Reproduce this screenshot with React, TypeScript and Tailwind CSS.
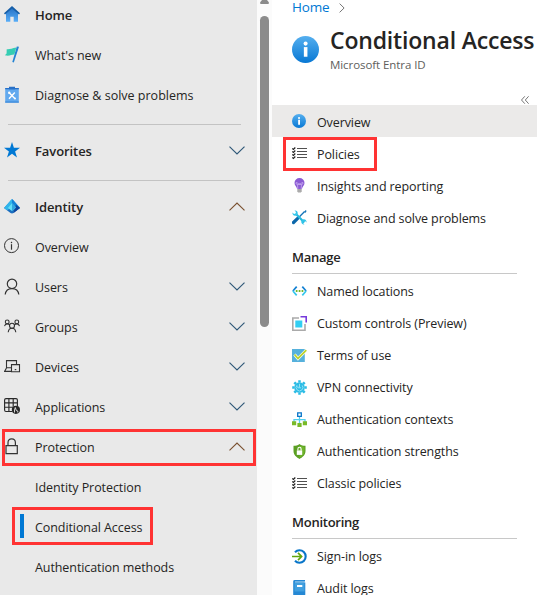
import type { ReactNode } from "react";

type Toggle = "down" | "up";

function Chevron({ dir }: { dir: Toggle }) {
  return (
    <svg width="16" height="9" viewBox="0 0 16 9" fill="none" strokeWidth="1.15" className="absolute right-3 top-[15px]">
      <path d={dir === "down" ? "M.5 .7 8 8 15.5 .7" : "M.5 8.3 8 1 15.5 8.3"} stroke={dir === "down" ? "#2f5878" : "#7a5130"} />
    </svg>
  );
}

function HomeIcon() {
  return (
    <svg width="16" height="16" viewBox="0 0 16 16">
      <defs><linearGradient id="home" x2="0" y2="1"><stop stopColor="#2470c4" /><stop offset="1" stopColor="#59aef8" /></linearGradient></defs>
      <path d="M2 7 8 1.5 14 7v8.8H9.7v-5H6.3v5H2z" fill="url(#home)" />
      <path d="M8 0 16 7.3 15 8.4 8 2.5 1 8.4 0 7.3z" fill="#155ea8" />
    </svg>
  );
}

function FlagIcon() {
  return (
    <svg width="16" height="17" viewBox="0 0 16 17">
      <path d="M12.8.5 15 .8 9.8 16.4 8.3 16z" fill="#2383d3" />
      <path d="M2.700 3.200c3 .4 5-.9 9.600-1.700l-1.900 7C7.300 8.400 5.500 10.600.9 9.300L2.600 7.500z" fill="#35cdb3" />
    </svg>
  );
}

function ClipboardIcon() {
  return (
    <svg width="16" height="17" viewBox="0 0 16 17">
      <path d="M1.2 2h13.6v14.6H1.2z" fill="#62a9ee" />
      <path d="M1.2 2h13.6v1.2H1.2zM5 .8h6v2.8H5z" fill="#2870c7" />
      <path d="M1.2 15.5h13.6v1.1H1.2z" fill="#3584d8" />
      <path d="m5 6.500 6 6.300M10.800 6.500 5 12.800" stroke="#fff" strokeWidth="1.4" />
      <circle cx="5.200" cy="6.800" r="1.2" fill="#fff" /><circle cx="11" cy="12.6" r="1" fill="#fff" />
    </svg>
  );
}

function StarIcon() {
  return (
    <svg width="16" height="16" viewBox="0 0 16 16">
      <path d="M8 0 9.9 5.8H16L11.1 9.5 13 15.5 8 11.8 3 15.5 4.9 9.5 0 5.8H6.1z" fill="#0078d4" />
    </svg>
  );
}

function EntraIcon() {
  return (
    <svg width="16" height="15" viewBox="0 0 16 15">
      <path d="M8 .3 16 9 9.5 14q-1.5.9-3 0L0 9z" fill="#1b6fc0" />
      <path d="M8 .3 12.2 5 8 8.5 3 11.2 0 9 6.9.9Q7.400.3 8 .3z" fill="#31b5eb" />
      <path d="M8 .3Q8.700.3 9.200.9L16 8.800 12.200 11.700 8 7.500z" fill="#1685d8" />
      <path d="M11.900 5.800 16 9 9.500 14z" fill="#10439a" />
      <path d="M8 4.200 12 8.600 8 12 3.900 9z" fill="#63dff7" />
      <path d="M8 4.200 12 8.600 8 12z" fill="#32a6df" />
    </svg>
  );
}

function InfoLineIcon() {
  return (
    <svg width="16" height="16" viewBox="0 0 16 16" fill="none" stroke="#333" strokeWidth="1">
      <circle cx="7.500" cy="7.600" r="7" /><path d="M7.500 6.200v5.500" strokeWidth="1.200" /><path d="M7.500 3.800v1.400" strokeWidth="1.300" />
    </svg>
  );
}

function UserIcon() {
  return (
    <svg width="16" height="17" viewBox="0 0 16 17" fill="none" stroke="#333" strokeWidth="1.200">
      <circle cx="8" cy="5.800" r="4.700" /><path d="M1.200 16.500C1.700 12.700 4 10.600 8 10.600s6.300 2.100 6.800 5.900" />
    </svg>
  );
}

function GroupIcon() {
  return (
    <svg width="16" height="14" viewBox="0 0 16 14" fill="none" stroke="#333" strokeWidth="1.100">
      <circle cx="3.200" cy="2.900" r="1.900" /><circle cx="12.800" cy="2.900" r="1.900" /><circle cx="8" cy="6.800" r="2.500" />
      <path d="M.5 7.200C.8 5.700 1.800 4.900 3.200 4.900c1.200 0 2 .5 2.600 1.200M15.500 7.200c-.3-1.500-1.300-2.300-2.700-2.300-1.200 0-2 .5-2.600 1.200M4.200 13.200C4.500 10.800 5.700 9.300 8 9.300s3.500 1.500 3.800 3.900" />
    </svg>
  );
}

function DevicesIcon() {
  return (
    <svg width="17" height="13" viewBox="0 0 17 13" fill="none" stroke="#333" strokeWidth="1.100">
      <path d="M12.500 4.500V.6h-10v7.200M7 11.400H.6l2-3.600H7" />
      <path d="M7.500 4.600h8v7.200h-8z" /><path d="M10.700 9.600h1.600" />
    </svg>
  );
}

function AppsIcon() {
  return (
    <svg width="17" height="17" viewBox="0 0 17 17" fill="none" stroke="#292929" strokeWidth="1.150">
      <path d="M8 13.500H2Q.6 13.500.6 12V2Q.6.6 2 .6h10q1.400 0 1.400 1.400v6M.6 4.900h12.800M.6 9.200h8.500M4.900.6v12.900M9.200.6v8" />
      <circle cx="11.900" cy="11.800" r="4.100" fill="#272727" stroke="none" />
      <path d="M11.300 9.500 10.500 12v2.500M11.300 9.500l1 3 1.500.5v1.500" stroke="#e9e9e9" strokeWidth=".9" />
    </svg>
  );
}

function LockIcon() {
  return (
    <svg width="14" height="17" viewBox="0 0 14 17" fill="none" stroke="#333" strokeWidth="1.200" className="ml-[1px]">
      <path d="M1 7.600h11.300v8.100H1zM3 7.500V4.700q0-3.900 3.700-3.900t3.700 3.900v2.800" />
    </svg>
  );
}

function InfoIcon({ size }: { size: number }) {
  return (
    <svg width={size} height={size} viewBox="0 0 28 28">
      <defs><linearGradient id={`info${size}`} x2="0" y2="1"><stop stopColor="#55afef" /><stop offset="1" stopColor="#0878d4" /></linearGradient></defs>
      <circle cx="14" cy="14" r="14" fill={`url(#info${size})`} />
      <path d="M12.300 11.500h3.700v10h-3.700z" fill="#fff" /><circle cx="14.100" cy="7.900" r="2.100" fill="#fff" />
    </svg>
  );
}

function ListIcon() {
  return (
    <svg width="15" height="13" viewBox="0 0 15 13" fill="none">
      <path d="M5 1.500h10M5 4.500h10M5 7.500h10M5 10.500h10" stroke="#505050" strokeWidth="1.200" />
      <path d="m.3 1.500 1.100 1L3.300.5M.3 4.500l1.100 1 1.900-2M.3 7.500l1.100 1 1.900-2M.3 10.500l1.100 1 1.900-2" stroke="#202020" strokeWidth="1.200" />
    </svg>
  );
}

function BulbIcon() {
  return (
    <svg width="15" height="15" viewBox="0 0 15 15">
      <path d="M7.500 0a5 5 0 0 1 5 5c0 2.700-2.300 3.600-2.600 6H5.100C4.800 8.600 2.500 7.700 2.500 5a5 5 0 0 1 5-5z" fill="#8b5bd3" />
      <path d="M5.800 11 5.500 6.500M9.200 11l.3-4.500M5.500 6.500q-2-.2-1.500-1.800 1.500-.7 2 1.100h3q.5-1.800 2-1.100.5 1.600-1.500 1.800z" stroke="#c6a9f0" fill="none" strokeWidth=".8" />
      <path d="M5.300 11h4.400v2.300L8.900 14.500H6.100l-.8-1.200z" fill="#aaa" />
    </svg>
  );
}

function ToolsIcon() {
  return (
    <svg width="15" height="15" viewBox="0 0 15 15" fill="none">
      <path d="m12.600 1.500-8.800 9" stroke="#1474b8" strokeWidth="1.300" />
      <path d="m13.600 0 1 1-1.300 2-1.200-.9z" fill="#1474b8" />
      <path d="m5.700 8.300-4.200 4.200" stroke="#0b67aa" strokeWidth="3.200" strokeLinecap="round" />
      <path d="m4.500 4.500 7.800 8" stroke="#27b9df" strokeWidth="2.200" />
      <path d="M2.500.5 4 2 3.500 3.500 2 4 .5 2.500C.2 4.500 1.500 6 3.700 5.700l2-2C6 1.500 4.500.2 2.500.5zM12.500 14.500 11 13l.5-1.500 1.500-.5 1.500 1.500c.3-2-1-3.500-3.200-3.200l-2 2c-.3 2.200 1.200 3.500 3.200 3.200z" fill="#32c5e9" />
    </svg>
  );
}

function CodeIcon() {
  return (
    <svg width="15" height="10" viewBox="0 0 15 10" fill="none" strokeWidth="1.700">
      <path d="M4.700.6.9 5M10.300.6 14.100 5" stroke="#1683d3" /><path d="m.9 5 3.800 4.400M14.100 5l-3.800 4.400" stroke="#35c7ec" />
      <path d="M3.800 5h1.700M6.700 5h1.700M9.600 5h1.700" stroke="#74b72b" strokeWidth="1.900" />
    </svg>
  );
}

function CustomIcon() {
  return (
    <svg width="15" height="15" viewBox="0 0 15 15" fill="none">
      <path d="M7 2H.8v12.200H13V8" stroke="#aaa" strokeWidth="1.600" />
      <path d="M8.500.8h5.700v5.700" stroke="#773adc" strokeWidth="1.600" /><path d="M3.300 4.500h7v7h-7z" fill="#32cef2" />
    </svg>
  );
}

function CheckIcon() {
  return (
    <svg width="15" height="13" viewBox="0 0 15 13" fill="none">
      <path d="M0 0h12.800v13H0z" fill="#56b1dc" /><path d="m2.500 5.500 3.500 4 8.300-8.300" stroke="#fff" strokeWidth="3" />
      <path d="m2.500 5.500 3.500 4 8.300-8.300" stroke="#bdd22c" strokeWidth="1.800" />
    </svg>
  );
}

function GearIcon() {
  return (
    <svg width="15" height="15" viewBox="0 0 15 15" fill="none">
      <circle cx="7.500" cy="7.500" r="5.300" fill="#2dbce5" />
      <path d="M7.500.2v2.300M7.500 12.500v2.300M.2 7.500h2.300M12.500 7.500h2.300M2.300 2.300l1.700 1.700M11 11l1.700 1.700M12.700 2.300 11 4M4 11l-1.700 1.700" stroke="#2dbce5" strokeWidth="2.500" />
      <path d="M5 5.200a3.400 3.400 0 1 0 5.200.2M7.500 3.800v4M5.800 6.200v1.600h3.300" stroke="#8fe2f7" strokeWidth="1" />
    </svg>
  );
}

function NetworkIcon() {
  return (
    <svg width="15" height="15" viewBox="0 0 15 15" fill="none">
      <path d="M7.500 5v6M2 10V7.700h11V10" stroke="#54cfee" strokeWidth="1.300" />
      <path d="M5.700.8h3.600v3.600H5.700z" fill="#fff" stroke="#0875c9" strokeWidth="1.300" />
      <path d="M0 9.200h4.200v4H0zM5.400 11h4.200v4H5.400zM10.800 9.200H15v4h-4.200z" fill="#79b928" />
    </svg>
  );
}

function ShieldIcon() {
  return (
    <svg width="15" height="15" viewBox="0 0 15 15">
      <path d="M7.500 0c2 1.500 3.500 1.700 6 1.800v5.300c0 4-3.300 6.500-6 7.900-2.700-1.400-6-3.900-6-7.900V1.800C4 1.700 5.500 1.500 7.500 0z" fill="#5b9f23" />
      <path d="M7.500 1.200c1.800 1 3.200 1.400 5 1.600v4.400c0 3.300-2.700 5.300-5 6.600z" fill="#6fb42b" />
      <path d="M4.800 6.400h5.400v4.500H4.800z" fill="#fff" /><path d="M5.900 6.500V5q0-1.700 1.600-1.700T9.100 5v1.500" stroke="#fff" fill="none" strokeWidth="1.100" />
    </svg>
  );
}

function SignInIcon() {
  return (
    <svg width="15" height="15" viewBox="0 0 15 15" fill="none">
      <path d="M3 3.200a6.200 6.200 0 1 1 0 8.600" stroke="#0875c9" strokeWidth="2.100" />
      <path d="M0 7.500h9.300M6 3.900l3.600 3.600L6 11.100" stroke="#61a60e" strokeWidth="1.700" />
    </svg>
  );
}

function BookIcon() {
  return (
    <svg width="15" height="16" viewBox="0 0 15 16">
      <path d="M3 .3h9.500v2H3z" fill="#c5e1f3" /><path d="M1.200 1.300Q1.200 0 2.700 0H13v1.500H3v1h10.300v11.700Q13.300 16 11.800 16H2.700q-1.500 0-1.500-1.500z" fill="#2588d4" />
      <path d="M2.500 2.500h10v9h-10z" fill="#409fdf" /><path d="M5 5h5.300v2H5z" fill="#fff" />
    </svg>
  );
}

function Mark({ className }: { className: string }) {
  return <span className={`pointer-events-none absolute z-10 border-3 border-[#ff3333] ${className}`} />;
}

function NavRow({ icon, label, toggle, bold, track = "tracking-[-0.08px]", children }: {
  icon?: ReactNode; label: string; toggle?: Toggle; bold?: boolean; track?: string; children?: ReactNode;
}) {
  return (
    <div className="relative flex h-10 shrink-0 items-center pl-1">
      <span className="flex w-[31px] shrink-0 -translate-y-px">{icon}</span>
      <span className={`whitespace-nowrap ${bold ? "text-[13px] font-semibold" : "pt-[2px]"} ${track}`}>{label}</span>
      {toggle && <Chevron dir={toggle} />}
      {children}
    </div>
  );
}

function MenuRow({ icon, label, active, pad = "pt-[2px]", children }: {
  icon: ReactNode; label: string; active?: boolean; pad?: string; children?: ReactNode;
}) {
  return (
    <div className={`relative flex h-8 shrink-0 items-center pl-5 ${active ? "bg-[#ebeae9]" : ""}`}>
      <span className="flex w-[25px] shrink-0">{icon}</span>
      <span className={`whitespace-nowrap tracking-[-0.1px] ${pad}`}>{label}</span>
      {children}
    </div>
  );
}

function NavDivider() {
  return <div className="h-4 shrink-0 pl-2 pt-[9px]"><div className="h-px w-[233px] bg-[#c3c3c3]" /></div>;
}

function Section({ title, height }: { title: string; height: string }) {
  return (
    <div className={`flex shrink-0 flex-col justify-end pb-px pl-5 ${height}`}>
      <h2 className="pb-[7px] text-[13px] leading-[18px] font-semibold tracking-[-0.25px]">{title}</h2>
      <div className="h-px w-[225px] bg-[#c8c8c8]" />
    </div>
  );
}

export default function App() {
  return (
    <div className="flex h-[595px] w-[537px] overflow-hidden bg-white font-['Open_Sans','Noto_Sans',sans-serif] text-[12.5px] leading-[18px] text-[#252423]">
      <nav className="flex w-[257px] shrink-0 flex-col bg-[#e9e9e9]">
        <div className="-mt-[5px] shrink-0"><NavRow icon={<HomeIcon />} label="Home" bold /></div>
        <NavRow icon={<FlagIcon />} label="What's new" />
        <NavRow icon={<ClipboardIcon />} label="Diagnose & solve problems" track="tracking-normal" />
        <NavDivider />
        <NavRow icon={<StarIcon />} label="Favorites" bold toggle="down" />
        <NavDivider />
        <NavRow icon={<EntraIcon />} label="Identity" bold toggle="up" />
        <NavRow icon={<InfoLineIcon />} label="Overview" />
        <NavRow icon={<UserIcon />} label="Users" toggle="down" />
        <NavRow icon={<GroupIcon />} label="Groups" toggle="down" />
        <NavRow icon={<DevicesIcon />} label="Devices" toggle="down" />
        <NavRow icon={<AppsIcon />} label="Applications" toggle="down" />
        <NavRow icon={<LockIcon />} label="Protection" toggle="up">
          <Mark className="left-[2px] top-[2px] h-[37px] w-[254px]" />
        </NavRow>
        <NavRow label="Identity Protection" />
        <NavRow label="Conditional Access">
          <span className="absolute left-5 top-[7px] h-6 w-1 bg-[#0078d4]" />
          <Mark className="left-3 top-0 h-[38px] w-[141px]" />
        </NavRow>
        <NavRow label="Authentication methods" />
      </nav>

      <div className="flex w-[15px] shrink-0 flex-col items-center bg-[#fbfbfb]">
        <svg width="9" height="4" viewBox="0 0 9 4"><path d="M2 0h5l2 2.500Q9 4 8 4H1Q0 4 0 2.500z" fill="#8b8b8b" /></svg>
        <div className="mt-3 h-[311px] w-[9px] rounded-full bg-[#8b8b8b]" />
      </div>

      <main className="flex min-w-0 flex-1 flex-col">
        <div className="flex h-4 shrink-0 items-center gap-[9px] pl-5 text-[#0078d4]">
          <span className="-mt-[3px] text-[13.5px] tracking-[-0.15px]">Home</span>
          <svg width="6" height="10" viewBox="0 0 6 10" fill="none"><path d="m.6.6 4.500 4.400L.6 9.400" stroke="#777" /></svg>
        </div>
        <header className="flex h-[78px] shrink-0 pl-5">
          <div className="mt-5 mr-[11px] shrink-0"><InfoIcon size={27} /></div>
          <div>
            <h1 className="mt-2 text-[23px] leading-8 font-semibold tracking-[-0.18px] whitespace-nowrap">Conditional Access</h1>
            <p className="pt-px text-[11.5px] leading-4 tracking-[-0.07px] text-[#605e5c]">Microsoft Entra ID</p>
          </div>
        </header>
        <div className="flex h-[11px] shrink-0 justify-end pr-2 pt-[2px]">
          <svg width="8" height="8" viewBox="0 0 8 8" fill="none" stroke="#666" strokeWidth=".9"><path d="M3.800.3.500 4l3.300 3.700M7.600.3 4.300 4l3.300 3.700" /></svg>
        </div>
        <MenuRow icon={<InfoIcon size={14} />} label="Overview" active pad="pt-1" />
        <MenuRow icon={<ListIcon />} label="Policies" pad="pt-1"><Mark className="left-[11px] top-0 h-[34px] w-[94px]" /></MenuRow>
        <MenuRow icon={<BulbIcon />} label="Insights and reporting" pad="pt-1" />
        <MenuRow icon={<ToolsIcon />} label="Diagnose and solve problems" pad="pt-1" />
        <Section title="Manage" height="h-[42px]" />
        <MenuRow icon={<CodeIcon />} label="Named locations" />
        <MenuRow icon={<CustomIcon />} label="Custom controls (Preview)" />
        <MenuRow icon={<CheckIcon />} label="Terms of use" />
        <MenuRow icon={<GearIcon />} label="VPN connectivity" />
        <MenuRow icon={<NetworkIcon />} label="Authentication contexts" />
        <MenuRow icon={<ShieldIcon />} label="Authentication strengths" />
        <MenuRow icon={<ListIcon />} label="Classic policies" />
        <Section title="Monitoring" height="h-[41px]" />
        <MenuRow icon={<SignInIcon />} label="Sign-in logs" />
        <MenuRow icon={<BookIcon />} label="Audit logs" />
      </main>
    </div>
  );
}
